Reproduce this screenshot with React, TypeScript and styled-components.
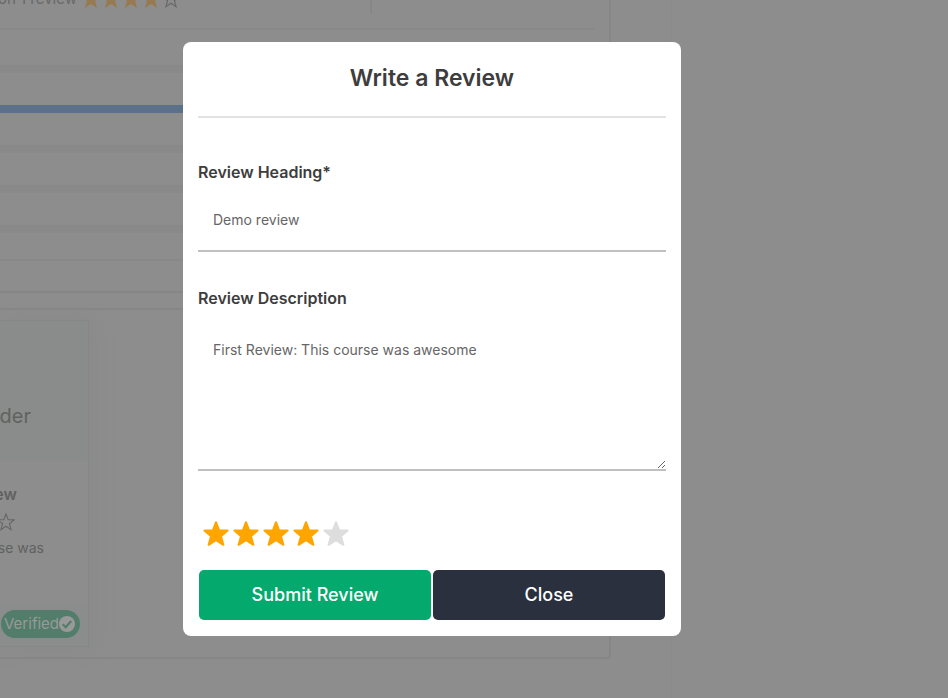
import React, { useState } from "react";
import styled, { createGlobalStyle } from "styled-components";

const GlobalStyle = createGlobalStyle`
  *, *::before, *::after { box-sizing: border-box; }
  body {
    margin: 0;
    min-height: 100vh;
    overflow: hidden;
    background: #8d8d8d;
    font-family: Inter, "Liberation Sans", sans-serif;
  }
  h1, h2, p { margin: 0; }
  svg { flex: none; }
`;

const Page = styled.div`
  display: grid;
  grid-template-columns: minmax(0, 672fr) minmax(0, 276fr);
  height: 100vh;
  color: #616161;
  overflow: hidden;
`;

const Content = styled.main`
  display: flex;
  flex-direction: column;
  gap: 15px;
  padding-right: 60px;
  border-right: 1px solid #8a8a8a;
`;

const Panel = styled.section`
  border: 2px solid #868686;
  border-top-width: ${(p: { $open?: boolean }) => (p.$open ? "0" : "2px")};
  border-left: 0;
  border-radius: ${(p: { $open?: boolean }) => (p.$open ? "0 0 4px 0" : "0 4px 4px 0")};
`;

const SummaryRow = styled.div`
  display: flex;
  align-items: flex-start;
  height: 30px;
  margin-right: 15px;
  border-bottom: 2px solid #888888;
`;

const Summary = styled.div`
  display: flex;
  align-items: center;
  gap: 5px;
  width: 372px;
  height: 14px;
  border-right: 2px solid #868686;
`;

const SummaryText = styled.p`
  display: flex;
  flex: none;
  justify-content: flex-end;
  width: 77px;
  margin-top: -16px;
  font-size: 15px;
  line-height: 20px;
  white-space: nowrap;
  color: #686868;
`;

const SummaryStars = styled.div`
  display: flex;
  gap: 2px;
  margin-top: -16px;
`;

const Bars = styled.div`
  display: flex;
  flex-direction: column;
  gap: 32px;
  padding: 35px 0 26px;
  margin-right: 15px;
  border-bottom: 2px solid #888888;
`;

const Bar = styled.div`
  height: 8px;
  background: ${(p: { $filled?: boolean }) => (p.$filled ? "#5b7189" : "#898989")};
`;

const PanelFoot = styled.div`
  height: 30px;
`;

const Reviews = styled.div`
  padding: 10px 0;
`;

const ReviewCard = styled.article`
  width: 89px;
  border: 1px solid #868686;
  border-left: 0;
  box-shadow: 4px 0 18px #8a8a8a;
`;

const CardCover = styled.div`
  display: flex;
  align-items: center;
  justify-content: flex-end;
  height: 140px;
  padding: 50px 57px 0 0;
  background: #898c8a;
  font-size: 20px;
  line-height: 28px;
`;

const CardBody = styled.div`
  display: flex;
  flex-direction: column;
  align-items: flex-start;
  height: 144px;
  padding-top: 21px;
  white-space: nowrap;
`;

const CardTitle = styled.h2`
  display: flex;
  justify-content: flex-end;
  width: 17px;
  font-size: 16px;
  line-height: 24px;
  font-weight: 600;
`;

const CardStars = styled.div`
  display: flex;
  justify-content: flex-end;
  width: 15px;
  margin-top: 7px;
`;

const CardText = styled.p`
  display: flex;
  justify-content: flex-end;
  width: 44px;
  margin-top: 7px;
  font-size: 14px;
  line-height: 20px;
`;

const CardFoot = styled.div`
  display: flex;
  justify-content: flex-end;
  padding: 5px 8px 8px;
  background: #8a8d8c;
`;

const Badge = styled.span`
  display: flex;
  flex: none;
  align-items: center;
  height: 28px;
  padding: 0 5px 0 3px;
  border-radius: 14px;
  background: #527d6b;
  color: #999999;
  font-size: 15px;
  line-height: 20px;
`;

const Overlay = styled.div`
  position: fixed;
  inset: 0;
  padding: 42px 267px 16px 183px;
`;

const Dialog = styled.form`
  display: flex;
  flex-direction: column;
  padding: 20px 15px 16px;
  border-radius: 8px;
  background: #ffffff;
  color: #3d3d3d;
`;

const Title = styled.h1`
  padding-bottom: 22px;
  margin-bottom: 42px;
  border-bottom: 2px solid #e2e2e2;
  font-size: 23px;
  line-height: 32px;
  font-weight: 600;
  text-align: center;
`;

const Label = styled.label`
  font-size: 16px;
  line-height: 24px;
  font-weight: 600;
`;

const fieldStyle = `
  display: block;
  width: 100%;
  margin: 0;
  border: 0;
  border-bottom: 2px solid #c0c0c0;
  border-radius: 0;
  outline: 0;
  background: transparent;
  color: #666666;
  font-family: inherit;
  font-size: 14px;
  line-height: 20px;
`;

const TextInput = styled.input`
  ${fieldStyle}
  height: 64px;
  margin: 4px 0 34px;
  padding: 0 15px;
`;

const TextArea = styled.textarea`
  ${fieldStyle}
  height: 146px;
  margin: 15px 0 49px;
  padding: 15px;
  resize: vertical;
`;

const Rating = styled.div`
  display: flex;
  gap: 2px;
  padding: 0 4px;
  margin-bottom: 22px;
`;

const StarButton = styled.button`
  display: flex;
  padding: 0;
  border: 0;
  background: none;
  cursor: pointer;
`;

const Actions = styled.div`
  display: grid;
  grid-template-columns: 1fr 1fr;
  gap: 2px;
  padding: 0 1px;
`;

const ActionButton = styled.button`
  height: 50px;
  padding: 0 15px;
  border: 0;
  border-radius: 5px;
  background: ${(p: { $dark?: boolean }) => (p.$dark ? "#2a303d" : "#04aa6d")};
  color: #ffffff;
  font-family: inherit;
  font-size: 18px;
  line-height: 24px;
  font-weight: 500;
  cursor: pointer;
`;

const RatingStar = ({ on }: { on: boolean }) => (
  <svg width="28" height="28" viewBox="0 0 28 28" aria-hidden="true">
    <path
      d="M14 2.2 17 10.2 25.6 10.6 19 16.2 21.4 24.8 14 20.2 6.6 24.8 9 16.2 2.4 10.6 11 10.2Z"
      fill={on ? "#ffa500" : "#dddddd"}
      stroke={on ? "#ffa500" : "#dddddd"}
      strokeWidth="2"
      strokeLinejoin="round"
    />
  </svg>
);

const SmallStar = ({ on, size }: { on?: boolean; size: number }) => (
  <svg width={size} height={size} viewBox="0 0 16 16" aria-hidden="true">
    <path
      d="M8 0.8 9.9 5.9 15.3 6.1 11 9.5 12.5 14.8 8 11.7 3.5 14.8 5 9.5 0.7 6.1 6.1 5.9Z"
      fill={on ? "#977a50" : "none"}
      stroke={on ? "#977a50" : "#676767"}
      strokeWidth="1"
    />
  </svg>
);

const CheckCircle = () => (
  <svg width="16" height="16" viewBox="0 0 16 16" aria-hidden="true">
    <circle cx="8" cy="8" r="8" fill="#999999" />
    <path d="M3.7 8.3 6.7 11.2 12.2 5" fill="none" stroke="#527d6b" strokeWidth="2.2" />
  </svg>
);

const scores = [1, 2, 3, 4, 5];

export default function App() {
  const [rating, setRating] = useState(4);

  return (
    <>
      <GlobalStyle />
      <Page>
        <Content>
          <Panel $open>
            <SummaryRow>
              <Summary>
                <SummaryText>on 1 review</SummaryText>
                <SummaryStars>
                  {scores.map((n) => (
                    <SmallStar key={n} on={n < 5} size={18} />
                  ))}
                </SummaryStars>
              </Summary>
            </SummaryRow>
            <Bars>
              {scores.map((n) => (
                <Bar key={n} $filled={n === 2} />
              ))}
            </Bars>
            <PanelFoot />
          </Panel>
          <Panel>
            <Reviews>
              <ReviewCard>
                <CardCover>oder</CardCover>
                <CardBody>
                  <CardTitle>ew</CardTitle>
                  <CardStars>
                    <SmallStar size={18} />
                  </CardStars>
                  <CardText>se was</CardText>
                </CardBody>
                <CardFoot>
                  <Badge>
                    Verified
                    <CheckCircle />
                  </Badge>
                </CardFoot>
              </ReviewCard>
            </Reviews>
          </Panel>
        </Content>
      </Page>
      <Overlay>
        <Dialog role="dialog" aria-labelledby="dialog-title" onSubmit={(e) => e.preventDefault()}>
          <Title id="dialog-title">Write a Review</Title>
          <Label htmlFor="heading">Review Heading*</Label>
          <TextInput id="heading" type="text" defaultValue="Demo review" />
          <Label htmlFor="description">Review Description</Label>
          <TextArea id="description" defaultValue="First Review: This course was awesome" />
          <Rating role="group" aria-label="Rating">
            {scores.map((n) => (
              <StarButton key={n} type="button" aria-label={`${n} of 5`} onClick={() => setRating(n)}>
                <RatingStar on={n <= rating} />
              </StarButton>
            ))}
          </Rating>
          <Actions>
            <ActionButton type="submit">Submit Review</ActionButton>
            <ActionButton type="button" $dark>
              Close
            </ActionButton>
          </Actions>
        </Dialog>
      </Overlay>
    </>
  );
}
